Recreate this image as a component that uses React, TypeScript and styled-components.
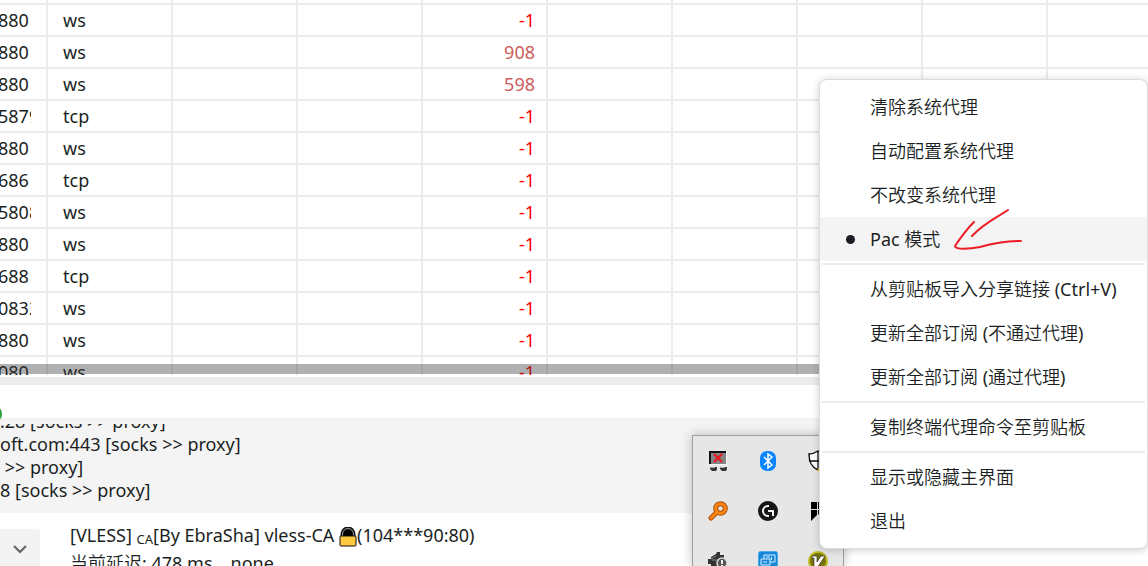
import React from "react";
import styled, { createGlobalStyle } from "styled-components";

const Global = createGlobalStyle`
  * { box-sizing: border-box; }
  html, body { margin: 0; }
  body {
    background: #fff;
    color: #1b1f23;
    font: 18px/23px "Noto Sans", "Noto Sans CJK SC DemiLight", "Noto Sans CJK SC", sans-serif;
    overflow: hidden;
  }
  button, select { font: inherit; color: inherit; }
`;

const Page = styled.main`
  display: flex;
  flex-direction: column;
  height: 100vh;
  overflow: hidden;
`;

const GridPane = styled.section`
  position: relative;
  flex: none;
  height: 375px;
  overflow: hidden;
`;

const Grid = styled.table`
  table-layout: fixed;
  width: 1173px;
  border-spacing: 0;
`;

const PortCol = styled.col`
  width: 48px;
`;

const Col = styled.col`
  width: 125px;
`;

const Cell = styled.td<{ $tone?: string; $height?: number }>`
  height: ${(p) => p.$height ?? 32}px;
  padding: 0 11px 0 15px;
  border-right: 2px solid #ececec;
  border-bottom: 2px solid #ececec;
  color: ${(p) => p.$tone ?? "inherit"};
  text-align: ${(p) => (p.$tone ? "right" : "left")};
`;

const PortCell = styled(Cell)`
  padding: 0 15px 0 0;
`;

const Port = styled.div`
  margin-left: -2px;
  overflow: hidden;
`;

const ScrollThumb = styled.div`
  position: absolute;
  left: 0;
  right: 0;
  bottom: 1px;
  height: 10px;
  background: rgba(54, 57, 60, 0.4);
`;

const Splitter = styled.div`
  flex: none;
  height: 8px;
  margin: 2px 0 33px;
  background: #ececec;
`;

const Console = styled.section`
  flex: none;
  height: 95px;
  padding-top: 6px;
  background: #f4f4f4;
`;

const ConsoleView = styled.div`
  display: flex;
  flex-direction: column;
  justify-content: flex-end;
  height: 78px;
  overflow: hidden;
  white-space: pre;
`;

const Line = styled.div`
  flex: none;
`;

const StatusBar = styled.footer`
  display: flex;
  flex: 1;
  gap: 30px;
  padding-top: 8px;
  min-height: 0;
  overflow: hidden;
`;

const Expand = styled.button`
  width: 40px;
  height: 40px;
  margin-top: 8px;
  padding: 0;
  border: 0;
  border-radius: 0 4px 0 0;
  background: #f3f3f3;
  display: grid;
  place-items: center;
`;

const Status = styled.div`
  white-space: pre;
  line-height: 28px;
`;

const Small = styled.span`
  font-size: 13px;
  line-height: 1;
  vertical-align: -2px;
`;

const Lock = styled.svg`
  vertical-align: -5px;
`;

const StateDot = styled.div`
  position: absolute;
  left: -16px;
  top: 405px;
  width: 18px;
  height: 18px;
  border-radius: 50%;
  background: #2fa23c;
`;

const Tray = styled.aside`
  position: absolute;
  right: 304px;
  top: 435px;
  bottom: 0;
  width: 152px;
  border: 1px solid #a0a0a0;
  border-bottom: 0;
  background: #e6e6e6;
  box-shadow: 0 0 10px rgba(0, 0, 0, 0.25);
  display: grid;
  grid-template-columns: repeat(3, 50px);
  grid-auto-rows: 50px;
  align-content: start;
  place-items: center;
  overflow: hidden;
`;

const Menu = styled.div`
  position: absolute;
  right: 0;
  top: 79px;
  width: 329px;
  padding: 5px 0;
  border: 1px solid #dcdcdc;
  border-radius: 8px;
  background: #fff;
  box-shadow: 0 1px 8px rgba(0, 0, 0, 0.2);
  overflow: hidden;
`;

const MenuItem = styled.button<{ $active?: boolean }>`
  display: grid;
  grid-template-columns: 9px 1fr;
  column-gap: 15px;
  align-items: center;
  width: 100%;
  height: 44px;
  padding: 0 0 0 26px;
  border: 0;
  background: ${(p) => (p.$active ? "#f4f4f4" : "transparent")};
  text-align: left;
  white-space: nowrap;
`;

const Bullet = styled.span<{ $on?: boolean }>`
  width: 9px;
  height: 9px;
  border-radius: 50%;
  background: ${(p) => (p.$on ? "#1b1f23" : "transparent")};
`;

const Divider = styled.hr`
  height: 2px;
  margin: 2px;
  border: 0;
  background: #ececec;
`;

const Scribble = styled.svg`
  position: absolute;
  right: 122px;
  top: 206px;
`;

const rows = [
  ["880", "ws", "-1"],
  ["880", "ws", "908"],
  ["880", "ws", "598"],
  ["5879", "tcp", "-1"],
  ["880", "ws", "-1"],
  ["686", "tcp", "-1"],
  ["5808", "ws", "-1"],
  ["880", "ws", "-1"],
  ["688", "tcp", "-1"],
  ["0832", "ws", "-1"],
  ["880", "ws", "-1"],
  ["080", "ws", "-1"],
];

const groups = [
  ["清除系统代理", "自动配置系统代理", "不改变系统代理", "Pac 模式"],
  ["从剪贴板导入分享链接 (Ctrl+V)", "更新全部订阅 (不通过代理)", "更新全部订阅 (通过代理)"],
  ["复制终端代理命令至剪贴板"],
  ["显示或隐藏主界面", "退出"],
];

const NetworkIcon = () => (
  <svg width="20" height="20" viewBox="0 0 20 20">
    <path d="M1 0h18v14H1z" fill="#f4f4f4" />
    <path d="M1 0h17v13H1z" fill="#858585" />
    <path d="M2 13V1h16" fill="none" stroke="#111" strokeWidth="2" />
    <path d="M6 3l8 8M14 3l-8 8" stroke="#f0141c" strokeWidth="2.200" />
    <path d="M2 16h7v2l-1 2H4l-2-2zM12 16h7v2l-1 2h-4l-2-2z" fill="#333" />
    <path d="M2 16.500h5M12 16.500h5" stroke="#a5a5a5" />
  </svg>
);

const BluetoothIcon = () => (
  <svg width="20" height="22" viewBox="0 0 20 22">
    <rect x="2" y="1" width="16" height="20" rx="7" fill="#0a84ff" />
    <path d="M6 7l8 8-4 3V4l4 3-8 8" fill="none" stroke="#fff" strokeWidth="1.500" />
  </svg>
);

const ShieldIcon = () => (
  <svg width="20" height="22" viewBox="0 0 20 22">
    <path d="M10 1c-3 2-5 3-9 3 0 8 2 13 9 16 7-3 9-8 9-16-4 0-6-1-9-3z" fill="#fff" stroke="#111" strokeWidth="1.500" />
    <path d="M10 1v19M1 11h18" stroke="#111" strokeWidth="1.300" />
    <path d="M9 21l5-9 6 9z" fill="#fbbc16" />
  </svg>
);

const SearchIcon = () => (
  <svg width="20" height="20" viewBox="0 0 20 20">
    <path d="M3 17l6-6" stroke="#a8500c" strokeWidth="5" strokeLinecap="round" />
    <circle cx="12.500" cy="7.500" r="4.800" fill="#e6e6e6" stroke="#a8500c" strokeWidth="5" />
    <path d="M3 17l6-6" stroke="#ff8413" strokeWidth="3" strokeLinecap="round" />
    <circle cx="12.500" cy="7.500" r="4.800" fill="none" stroke="#ff8413" strokeWidth="3" />
  </svg>
);

const LogiIcon = () => (
  <svg width="20" height="20" viewBox="0 0 20 20">
    <circle cx="10" cy="10" r="10" fill="#161616" />
    <path d="M11 5h-1a5 5 0 1 0 0 10h1" fill="none" stroke="#f4f4f4" strokeWidth="2" />
    <path d="M10 10h5v5" fill="none" stroke="#f4f4f4" strokeWidth="2" />
  </svg>
);

const FlagIcon = () => (
  <svg width="20" height="20" viewBox="0 0 20 20">
    <path d="M3 1h6v7H3zM10 1h7v7h-7zM3 9h6v5l-6 6zM10 9h7v11l-7-7z" fill="#000" />
  </svg>
);

const UsbIcon = () => (
  <svg width="20" height="20" viewBox="0 0 20 20">
    <path d="M0 8h3V6l5-3 1-2h3v3h4v12H3v-3H0z" fill="#333" />
    <path d="M3 8l5-3M4 9h8" stroke="#888" />
    <circle cx="14" cy="12" r="5" fill="#555" stroke="#d8d8d8" strokeWidth="1.500" />
    <path d="M14 9v4M14 14v2" stroke="#fff" strokeWidth="1.800" />
  </svg>
);

const ScreenIcon = () => (
  <svg width="20" height="20" viewBox="0 0 20 20">
    <rect x=".5" y=".5" width="19" height="19" rx="2" fill="#1687d9" stroke="#4aa9e8" />
    <path d="M6 4h11v7H6z" fill="#1687d9" stroke="#d9f0ff" />
    <path d="M3 8h9v6H3z" fill="#1687d9" stroke="#d9f0ff" />
    <path d="M8 6h4M13.500 6v3M5 11h4M4 16.500h10" stroke="#d9f0ff" />
  </svg>
);

const VIcon = () => (
  <svg width="20" height="20" viewBox="0 0 20 20">
    <circle cx="10" cy="10" r="9" fill="#77740a" stroke="#bdb921" strokeWidth="2" />
    <path d="M4 5h5v6l4-6h4l-8 12H6V7H4z" fill="#fff" stroke="#222" strokeWidth=".6" />
  </svg>
);

export default function App() {
  return (
    <>
      <Global />
      <Page>
        <GridPane>
          <Grid>
            <colgroup>
              <PortCol />
              {Array.from({ length: 9 }, (_, i) => (
                <Col key={i} />
              ))}
            </colgroup>
            <tbody>
              <tr>
                {Array.from({ length: 10 }, (_, i) => (
                  <Cell key={i} $height={5} />
                ))}
              </tr>
              {rows.map(([port, net, delay], r) => (
                <tr key={r}>
                  <PortCell>
                    <Port>{port}</Port>
                  </PortCell>
                  <Cell>{net}</Cell>
                  <Cell />
                  <Cell />
                  <Cell $tone={delay === "-1" ? "#ff0000" : "#cd5c5c"}>{delay}</Cell>
                  {Array.from({ length: 5 }, (_, i) => (
                    <Cell key={i} />
                  ))}
                </tr>
              ))}
            </tbody>
          </Grid>
          <ScrollThumb />
        </GridPane>
        <Splitter />
        <Console>
          <ConsoleView>
            <Line>.28 [socks &gt;&gt; proxy]</Line>
            <Line>oft.com:443 [socks &gt;&gt; proxy]</Line>
            <Line> &gt;&gt; proxy]</Line>
            <Line>8 [socks &gt;&gt; proxy]</Line>
          </ConsoleView>
        </Console>
        <StatusBar>
          <Expand aria-label="展开">
            <svg width="16" height="10" viewBox="0 0 16 10">
              <path d="M2 2l6 6 6-6" fill="none" stroke="#666" strokeWidth="2.200" />
            </svg>
          </Expand>
          <Status>
            <div>
              [VLESS] <Small>CA</Small>[By EbraSha] vless-CA{" "}
              <Lock width="18" height="20" viewBox="0 0 18 20">
                <path d="M3 10V7a6 6 0 0 1 12 0v3" fill="#000" stroke="#111" strokeWidth="3" />
                <path d="M3.500 9V7a5.500 5.500 0 0 1 11 0v2" fill="none" stroke="#999" />
                <rect x="1" y="9" width="16" height="10" rx="1" fill="#ffc83d" stroke="#111" />
              </Lock>
              (104***90:80)
            </div>
            <div>当前延迟: 478 ms，none</div>
          </Status>
        </StatusBar>
      </Page>
      <StateDot />
      <Tray>
        <NetworkIcon />
        <BluetoothIcon />
        <ShieldIcon />
        <SearchIcon />
        <LogiIcon />
        <FlagIcon />
        <UsbIcon />
        <ScreenIcon />
        <VIcon />
      </Tray>
      <Menu role="menu">
        {groups.map((items, g) => (
          <React.Fragment key={g}>
            {g > 0 && <Divider />}
            {items.map((label) => {
              const active = label === "Pac 模式";
              return (
                <MenuItem key={label} role="menuitemradio" aria-checked={active} $active={active}>
                  <Bullet $on={active} />
                  {label}
                </MenuItem>
              );
            })}
          </React.Fragment>
        ))}
      </Menu>
      <Scribble width="74" height="46" viewBox="0 0 74 46" fill="none" stroke="#ee1c24" strokeWidth="2" strokeLinecap="round" strokeLinejoin="round">
        <path d="M56 4C44 12 32 17 20 30M22 16C16 22 9 31 3 40C3 44 18 43 28 41C42 37 56 35 69 35" />
      </Scribble>
    </>
  );
}
